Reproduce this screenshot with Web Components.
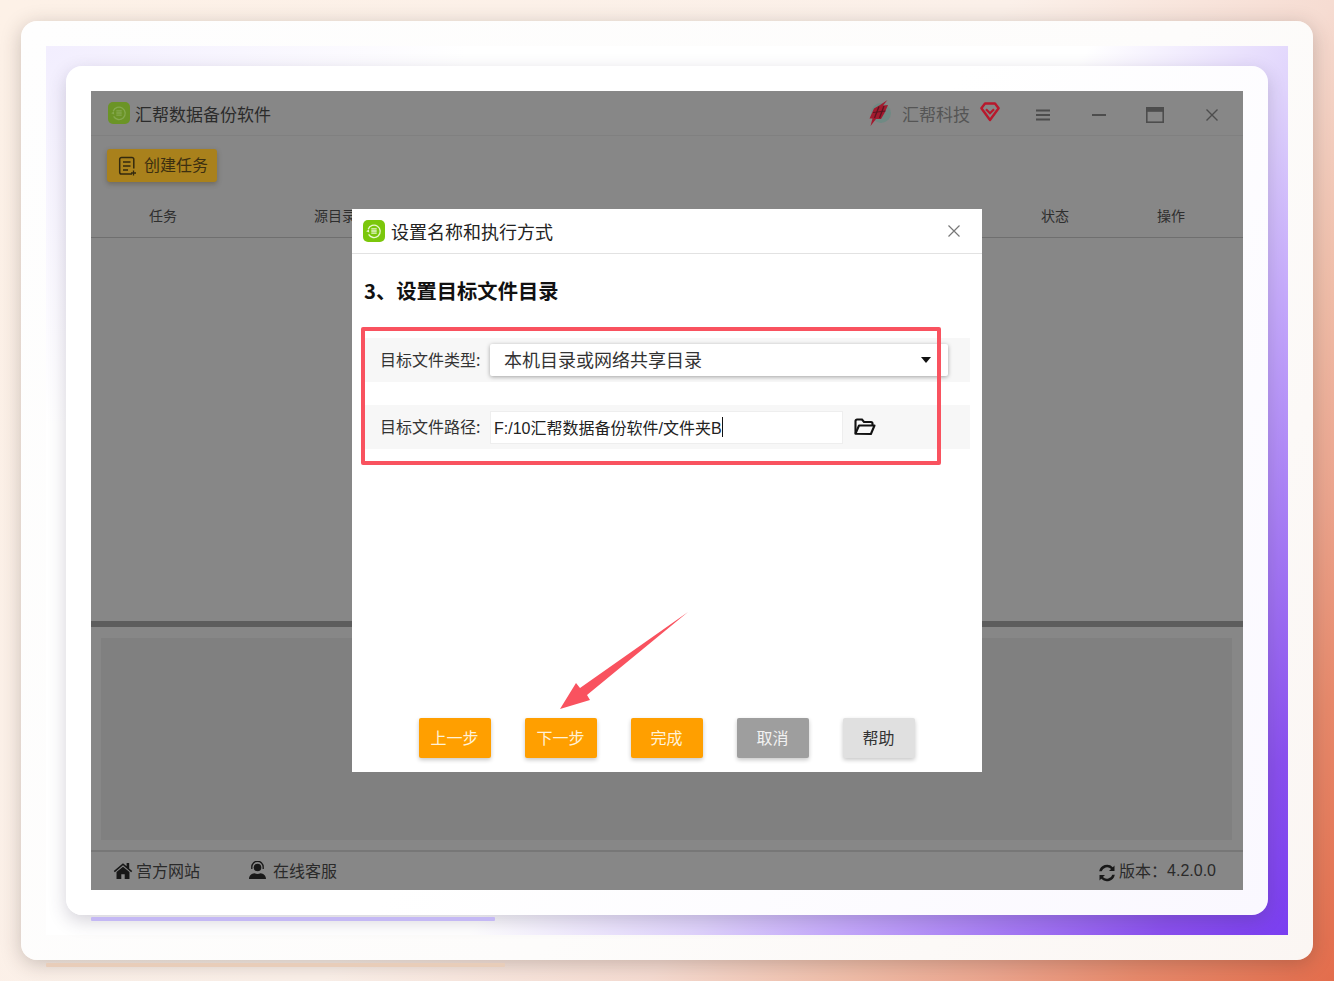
<!DOCTYPE html>
<html lang="zh">
<head>
<meta charset="utf-8">
<title>汇帮数据备份软件</title>
<style>
html,body{margin:0;padding:0;width:1334px;height:981px;overflow:hidden}
body{font-family:"Noto Sans CJK SC","Noto Sans",sans-serif;color:#222}
</style>
</head>
<body>
<x-stage>
  <x-app>
    <x-titlebar slot="title"></x-titlebar>
    <x-toolbar slot="toolbar"></x-toolbar>
    <x-table-head slot="head"></x-table-head>
    <x-footer slot="footer"></x-footer>
    <x-dialog slot="modal">
      <x-field-row label="目标文件类型:" kind="select" value="本机目录或网络共享目录"></x-field-row>
      <x-field-row label="目标文件路径:" kind="input" value="F:/10汇帮数据备份软件/文件夹B"></x-field-row>
      <x-btn slot="actions" tone="orange">上一步</x-btn>
      <x-btn slot="actions" tone="orange">下一步</x-btn>
      <x-btn slot="actions" tone="orange">完成</x-btn>
      <x-btn slot="actions" tone="gray">取消</x-btn>
      <x-btn slot="actions" tone="light">帮助</x-btn>
    </x-dialog>
  </x-app>
</x-stage>
<script>
const LOGO = (bg, fg) => `<svg viewBox="0 0 22 22" width="22" height="22" style="display:block"><rect width="22" height="22" rx="5" fill="${bg}"/><path d="M5.2 9.2A6.2 6.2 0 1 1 5.6 14.4" fill="none" stroke="${fg}" stroke-width="1.3"/><path d="M3.2 11.2 5.8 9.4 6.2 12.4z" fill="${fg}"/><path d="M8.3 8.8h5.4M8.3 11h5.4M8.3 13.2h5.4" stroke="${fg}" stroke-width="1.3"/></svg>`;
function def(name, css, html){
  customElements.define(name, class extends HTMLElement{
    constructor(){super();this.attachShadow({mode:"open"});}
    connectedCallback(){
      this.shadowRoot.innerHTML = `<style>${css}</style>` + (typeof html==="function"?html(this):html);
    }
  });
}
def("x-stage",`
  :host{display:block;box-sizing:border-box;width:1334px;height:981px;padding:21px;position:relative;
    background:linear-gradient(125deg,#fdf1e7 0%,#fbf0e9 50%,#f6dcd2 66%,#f0bda8 76%,#eca58e 83%,#e88a6c 90%,#e36d4c 100%)}
  .outer{height:939px;box-sizing:border-box;padding:25px;background:linear-gradient(125deg,#fefefe,#fdfcfb 60%,#fbf6f3);border-radius:16px;box-shadow:0 4px 20px rgba(50,40,35,.25)}
  .panel{height:889px;box-sizing:border-box;padding:20px;
    background:radial-gradient(ellipse 420px 380px at 0 0,#f2eefe 0%,rgba(242,238,254,0) 100%),linear-gradient(125deg,#fff 0%,#fff 56%,#e0d4fc 68%,#c4a8fb 76%,#a87ef5 84%,#8a50ee 93%,#7a3ef0 100%)}
  .card{height:849px;box-sizing:border-box;padding:25px;background:linear-gradient(125deg,#fff 50%,#faf8ff);border-radius:16px;box-shadow:0 6px 18px rgba(60,50,80,.22)}
  .bar{position:absolute;height:4px;border-radius:1px}
  .b1{left:91px;top:917px;width:404px;background:#c4b8f4}
  .b2{left:46px;top:963px;width:459px;background:#e8cdb9}
`,`<div class="outer"><div class="panel"><div class="card"><slot></slot></div></div></div><div class="bar b1"></div><div class="bar b2"></div>`);

def("x-app",`
  :host{display:flex;flex-direction:column;position:relative;height:799px;background:#878787}
  .body{flex:1;min-height:0}
  .split{height:6px;background:#5d5d5d}
  .log{height:225px;box-sizing:border-box;padding:11px 11px 11px 10px;border-bottom:2px solid #777}
  .log div{height:202px;background:#808080}
`,`<slot name="title"></slot><slot name="toolbar"></slot><slot name="head"></slot><div class="body"></div><div class="split"></div><div class="log"><div></div></div><slot name="footer"></slot><slot name="modal"></slot>`);

def("x-titlebar",`
  :host{display:flex;align-items:center;height:45px;box-sizing:border-box;border-bottom:1px solid #808080;padding:0 0 0 17px;color:#2b2b2b;font-size:17px}
  .name{margin-left:5px;white-space:nowrap}
  .sp{flex:1}
  .co{color:#555;font-size:17px;margin-left:10px;white-space:nowrap}
  svg{display:block;flex:none}
  .ctl{margin-top:3px}
`,`${LOGO("#6b9426","#85a84f")}<span class="name">汇帮数据备份软件</span><span class="sp"></span>
  <svg width="24" height="26" viewBox="0 0 24 26"><circle cx="13" cy="13" r="10" fill="#6f8a84"/><path d="M19.500 0 15 5.500 20 5 16.500 13 13 19 8 19 2.500 26 4.500 18.500 1.500 18.500 6 8.500 12 5z" fill="#a21a2e"/><path d="M11 6.500 6.500 18M16 6 11.500 18" stroke="#5c1420" stroke-width="1.300"/><path d="M5 12.500 17.500 11" stroke="#5c1420" stroke-width="1"/></svg>
  <span class="co">汇帮科技</span>
  <svg style="margin:-2px 0 0 10px" width="20" height="20" viewBox="0 0 20 20"><path d="M5 1.500h10l3.600 4.700L10 18 1.400 6.200z" fill="none" stroke="#b8182c" stroke-width="2.400" stroke-linejoin="round"/><path d="M6 7.200l4 4 4-4" fill="none" stroke="#b8182c" stroke-width="2.200"/></svg>
  <svg class="ctl" style="margin-left:36px" width="14" height="12" viewBox="0 0 14 12"><path d="M0 1.500h14M0 6h14M0 10.500h14" stroke="#4d4d4d" stroke-width="2"/></svg>
  <svg class="ctl" style="margin-left:42px" width="14" height="4" viewBox="0 0 14 4"><path d="M0 2h14" stroke="#4d4d4d" stroke-width="2"/></svg>
  <svg class="ctl" style="margin-left:40px" width="18" height="16" viewBox="0 0 18 16"><rect x=".8" y=".8" width="16.400" height="14.400" fill="none" stroke="#4d4d4d" stroke-width="1.600"/><rect x=".8" y=".8" width="16.400" height="4" fill="#4d4d4d"/></svg>
  <svg class="ctl" style="margin-left:42px;margin-right:25px" width="12" height="12" viewBox="0 0 12 12"><path d="M.5.5l11 11M11.500.5l-11 11" stroke="#4d4d4d" stroke-width="1.400"/></svg>`);

def("x-toolbar",`
  :host{display:block;height:59px;box-sizing:border-box;padding:13px 0 0 16px}
  .b{display:flex;align-items:center;width:110px;height:33px;box-sizing:border-box;padding-left:11px;gap:6px;background:#a9811c;border-radius:3px;color:#3c2f10;font-size:16px;box-shadow:0 2px 5px rgba(60,50,20,.35);white-space:nowrap}
  .b span{padding-bottom:3px}
  svg{display:block;flex:none}
`,`<div class="b"><svg width="20" height="20" viewBox="0 0 20 20"><path d="M14 18H3.500A1.800 1.800 0 0 1 1.700 16.200V3.300A1.800 1.800 0 0 1 3.500 1.500h10.500A1.800 1.800 0 0 1 15.800 3.300V12.500" fill="none" stroke="#33290e" stroke-width="1.500"/><path d="M5 6h7.500M5 10h7.500M5 14h5" stroke="#33290e" stroke-width="1.500"/><path d="M15.500 14.500v5M13 17h5" stroke="#33290e" stroke-width="1.300"/></svg><span>创建任务</span></div>`);

def("x-table-head",`
  :host{display:grid;grid-template-columns:144px 200px 1fr 116px 116px 14px;align-items:center;height:43px;box-sizing:border-box;border-bottom:1px solid #6f6f6f;padding-bottom:2px;font-size:14px;color:#2e2e2e;text-align:center}
`,`<span>任务</span><span>源目录</span><span></span><span>状态</span><span>操作</span><span></span>`);

def("x-footer",`
  :host{display:flex;align-items:center;height:38px;box-sizing:border-box;padding:0 27px 2px 22px;font-size:16px;color:#2a2a2a}
  .i{display:flex;align-items:center;white-space:nowrap}
  .sp{flex:1}
  svg{display:block;flex:none}
  .v{font-family:"Liberation Sans","Noto Sans CJK SC",sans-serif;margin-top:2px}
`,`<span class="i"><svg width="20" height="19" viewBox="0 0 21 19" style="margin-right:3px"><path d="M10.500 1.800 0.800 10l1.100 1.300 8.600-7.200 8.600 7.200 1.100-1.300-3.200-2.700V1.500h-2.700v3.500z" fill="#181818"/><path d="M10.500 5.500 3.700 11.200V18.500h5V13.500h3.600V18.500h5V11.200z" fill="#181818"/></svg>宫方网站</span>
  <span class="i" style="margin-left:48px"><svg width="19" height="18" viewBox="0 0 19 18" style="margin-right:6px"><circle cx="9.500" cy="6.500" r="3.800" fill="#181818"/><path d="M3.800 8V6a5.700 5.700 0 0 1 11.400 0v2" fill="none" stroke="#181818" stroke-width="1.300"/><path d="M1 18c0-3.500 2.500-5.200 5.500-5.700 1.800 1 4.200 1 6 0 3 .5 5.500 2.200 5.500 5.700z" fill="#181818"/></svg>在线客服</span>
  <span class="sp"></span>
  <span class="i"><svg width="18" height="18" viewBox="0 0 18 18" style="margin:6px 3px 0 0"><path d="M16.500 1.500v5.500H11l2.100-2.100A5.600 5.600 0 0 0 3.700 7.300H1.200A8 8 0 0 1 14.800 3.200z" fill="#181818"/><path d="M1.500 16.500V11H7l-2.100 2.100a5.600 5.600 0 0 0 9.400-2.400h2.500A8 8 0 0 1 3.200 14.800z" fill="#181818"/></svg><span>版本&#xFF1A;</span><span class="v">4.2.0.0</span></span>`);

def("x-dialog",`
  :host{display:flex;flex-direction:column;position:absolute;left:261px;top:118px;width:630px;height:563px;background:#fff;color:#222}
  .hd{display:flex;align-items:center;height:45px;box-sizing:border-box;border-bottom:1px solid #e2e2e2;padding:0 22px 0 11px;font-size:18px;flex:none}
  .hd span{margin-left:6px;flex:1}
  h2{margin:19px 0 31px 12px;font-size:20.3px;line-height:34px;font-weight:700;color:#111;flex:none}
  .rows{display:flex;flex-direction:column;gap:23px;padding:0 12px 0 13px;flex:1}
  .acts{display:flex;justify-content:center;gap:34px;padding:0 1px 14px 0;flex:none}
  .red{position:absolute;left:9px;top:118px;width:580px;height:138px;box-sizing:border-box;border:4px solid #f9525f;border-radius:2px;pointer-events:none}
  .arrow{position:absolute;left:200px;top:400px;pointer-events:none}
  svg{display:block}
`,`<div class="hd">${LOGO("#7bc70b","#e9f8cf")}<span>设置名称和执行方式</span><svg width="12" height="12" viewBox="0 0 12 12"><path d="M.5.500l11 11M11.500.500l-11 11" stroke="#777" stroke-width="1.200"/></svg></div>
  <h2>3、设置目标文件目录</h2>
  <div class="rows"><slot></slot></div>
  <div class="acts"><slot name="actions"></slot></div>
  <div class="red"></div>
  <svg class="arrow" width="140" height="105" viewBox="0 0 140 105"><polygon points="136,3 28,79 24,74 8,100 38,91 35,86" fill="#f9525f"/></svg>`);

def("x-field-row",`
  :host{display:flex;align-items:center;height:44px;box-sizing:border-box;background:#f7f7f7;padding-left:15px;font-size:16px;color:#333}
  .l{width:110px;flex:none;white-space:nowrap;padding-bottom:2px}
  .sel{display:flex;align-items:center;justify-content:space-between;box-sizing:border-box;width:458px;height:32px;padding:0 17px 2px 14px;background:#fff;border-radius:2px;font-size:18px;color:#333;box-shadow:0 1px 4px rgba(0,0,0,.35);flex:none}
  .sel i{width:0;height:0;border:5px solid transparent;border-top:6px solid #111;border-bottom:0;margin-top:2px}
  .inp{display:flex;align-items:center;box-sizing:border-box;width:353px;height:33px;padding:0 0 1px 3px;background:#fff;border:1px solid #eee;font-family:"Liberation Sans","Noto Sans CJK SC",sans-serif;font-size:16px;color:#222;white-space:nowrap;flex:none}
  .inp b{display:inline-block;width:1px;height:20px;background:#111}
  svg{display:block;margin-left:11px;flex:none}
`,(el)=>{
  const lab=el.getAttribute("label"), v=el.getAttribute("value");
  return el.getAttribute("kind")==="select"
  ? `<span class="l">${lab}</span><div class="sel"><span>${v}</span><i></i></div>`
  : `<span class="l">${lab}</span><div class="inp"><span>${v}</span><b></b></div><svg width="22" height="18" viewBox="0 0 22 18"><path d="M1.500 15.500V3A1.500 1.500 0 0 1 3 1.500h5l2 2.500h7A1.500 1.500 0 0 1 18.500 5.500V7" fill="none" stroke="#111" stroke-width="2.100"/><path d="M1.500 15.700 5 7.500h15.500l-3.600 8.500z" fill="none" stroke="#111" stroke-width="2.100" stroke-linejoin="round"/></svg>`;
});

def("x-btn",`
  :host{display:flex;align-items:center;justify-content:center;box-sizing:border-box;width:72px;height:40px;padding-bottom:2px;border-radius:2px;font-size:16px;box-shadow:0 2px 4px rgba(0,0,0,.22);flex:none}
  :host([tone=orange]){background:#ff9f00;color:#fff2d8}
  :host([tone=gray]){background:#9e9e9e;color:#f2f2f2}
  :host([tone=light]){background:#e0e0e0;color:#333}
`,`<slot></slot>`);
</script>
</body>
</html>
